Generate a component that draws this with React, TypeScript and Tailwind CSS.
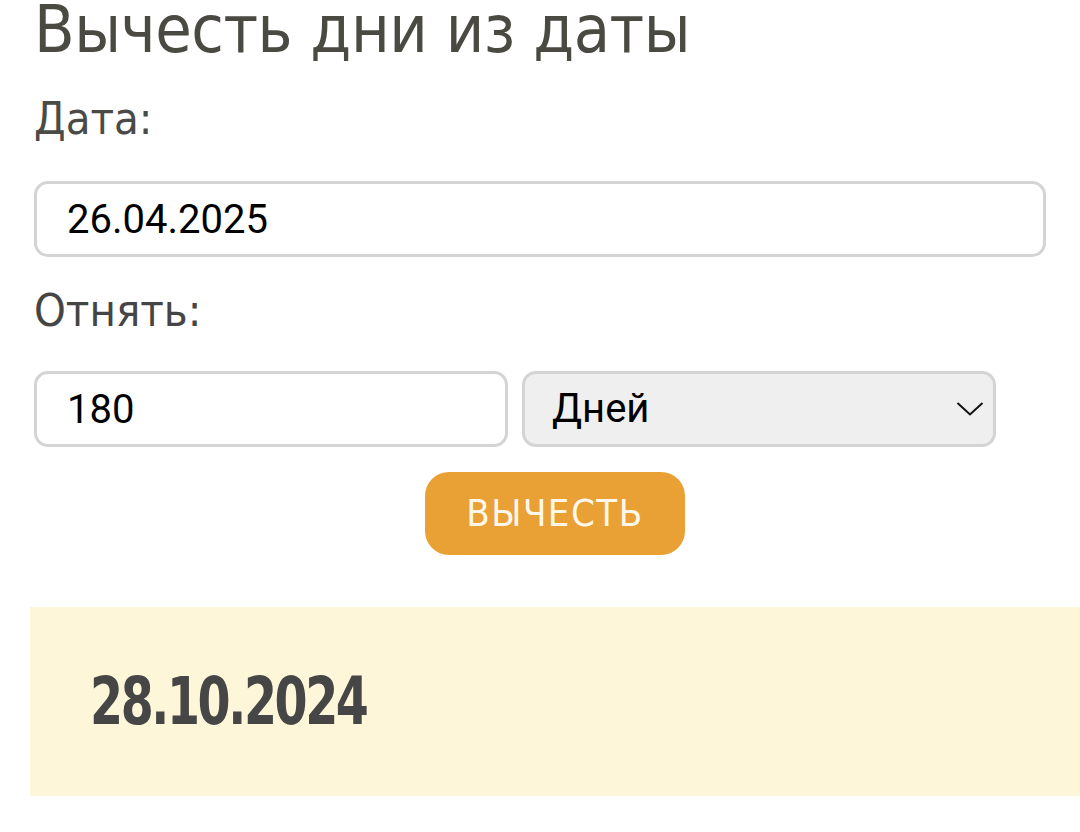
import { ChangeEvent, useState } from 'react'

const NARROW = "font-['Liberation_Sans_Narrow','DejaVu_Sans_Condensed',sans-serif]"

export default function App() {
  const [date, setDate] = useState('26.04.2025')
  const [amount, setAmount] = useState('180')
  const [unit, setUnit] = useState('days')

  return (
    <div className="min-h-screen bg-white pb-10">
      <div className="pl-[34px] pr-[34px]">
        <h1 className={`${NARROW} text-[66px] leading-[60px] tracking-[-0.5px] text-[#4a4a42]`}>
          Вычесть дни из даты
        </h1>

        <label className={`${NARROW} block mt-[35px] text-[45px] leading-[48px] text-[#4a4a46]`}>
          Дата:
        </label>
        <input
          value={date}
          onChange={(e: ChangeEvent<HTMLInputElement>) => setDate(e.target.value)}
          className="mt-[38px] block w-full h-[76px] rounded-[14px] border-[3px] border-[#d4d4d4] bg-white px-[30px] font-['Roboto',sans-serif] text-[40px] text-black outline-none"
        />

        <label className={`${NARROW} block mt-[30px] text-[45px] leading-[48px] text-[#454545]`}>
          Отнять:
        </label>
        <div className="mt-[36px] flex gap-[14px] w-[962px]">
          <input
            value={amount}
            onChange={(e: ChangeEvent<HTMLInputElement>) => setAmount(e.target.value)}
            className="block w-[474px] h-[76px] rounded-[14px] border-[3px] border-[#d4d4d4] bg-white px-[30px] font-['Roboto',sans-serif] text-[40px] text-black outline-none"
          />
          <div className="relative w-[474px]">
            <select
              value={unit}
              onChange={(e: ChangeEvent<HTMLSelectElement>) => setUnit(e.target.value)}
              className="block w-full h-[76px] appearance-none rounded-[14px] border-[3px] border-[#d4d4d4] bg-[#efefef] px-[27px] font-['Roboto',sans-serif] text-[40px] text-black outline-none"
            >
              <option value="days">Дней</option>
              <option value="weeks">Недель</option>
              <option value="months">Месяцев</option>
              <option value="years">Лет</option>
            </select>
            <svg
              className="pointer-events-none absolute right-[12px] top-[30px]"
              width="28"
              height="16"
              viewBox="0 0 28 16"
              fill="none"
            >
              <polyline points="1.5,2 14,13.5 26.5,2" stroke="#111" strokeWidth="2" />
            </svg>
          </div>
        </div>

        <button
          className={`${NARROW} mt-[25px] ml-[391px] block w-[260px] h-[83px] rounded-[24px] bg-[#e9a035] text-[38px] tracking-[1.5px] text-[#fff8ea]`}
        >
          ВЫЧЕСТЬ
        </button>
      </div>

      <div className="mt-[52px] ml-[30px] h-[189px] bg-[#fef6d8] pl-[60px] flex items-center">
        <span
          className={`${NARROW} inline-block origin-left scale-x-[0.8] font-bold text-[66px] tracking-[-3px] text-[#464646]`}
        >
          28.10.2024
        </span>
      </div>
    </div>
  )
}
